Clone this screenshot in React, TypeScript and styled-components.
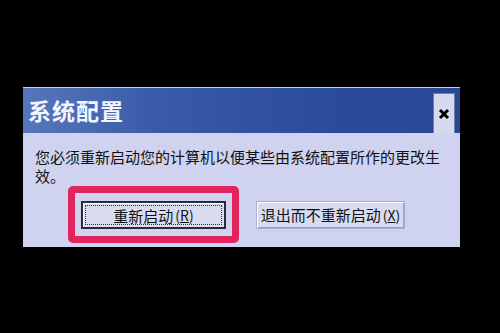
import React, { FunctionComponent } from 'react';
import styled, { createGlobalStyle } from 'styled-components';

const GlobalStyle = createGlobalStyle`
  html, body {
    margin: 0;
    padding: 0;
    background: #000;
  }
  body {
    width: 500px;
    height: 333px;
    overflow: hidden;
    font-family: 'Noto Sans CJK SC', 'Noto Sans', sans-serif;
  }
`;

const App: FunctionComponent = () => (
  <>
    <GlobalStyle />
    <Screen>
      <Dialog>
        <TitleBar>
          <Title>系统配置</Title>
          <CloseButton>
            <svg width="12" height="12" viewBox="0 0 12 12">
              <path d="M2 2 L10 10 M10 2 L2 10" stroke="#000" strokeWidth="3" />
            </svg>
          </CloseButton>
        </TitleBar>
        <Body>
          <Message>您必须重新启动您的计算机以便某些由系统配置所作的更改生效。</Message>
          <ButtonRow>
            <Highlight>
              <DialogButton primary>
                <FocusRing>
                  重新启动<Mnemonic>(<u>R</u>)</Mnemonic>
                </FocusRing>
              </DialogButton>
            </Highlight>
            <DialogButton>
              退出而不重新启动<Mnemonic>(<u>X</u>)</Mnemonic>
            </DialogButton>
          </ButtonRow>
        </Body>
      </Dialog>
    </Screen>
  </>
);

const Screen = styled.div`
  display: flex;
  flex-direction: column;
  align-items: flex-start;
  width: 500px;
  height: 333px;
  padding: 87px 0 0 23px;
  box-sizing: border-box;
  background: #000;
`;

const Dialog = styled.div`
  width: 437px;
  height: 160px;
  display: flex;
  flex-direction: column;
  background: #cfd3ef;
  border-top: 1px solid #c8cde6;
  box-sizing: border-box;
`;

const TitleBar = styled.div`
  height: 45px;
  display: flex;
  align-items: center;
  justify-content: space-between;
  padding: 0 5px 0 5px;
  background: linear-gradient(90deg, #5676bd 0%, #3a5ba8 30%, #2b4b9b 70%, #2a4896 100%);
  box-sizing: border-box;
`;

const Title = styled.span`
  font-size: 23px;
  font-weight: bold;
  color: #f4f6ff;
  letter-spacing: 1px;
  line-height: 1;
`;

const CloseButton = styled.div`
  align-self: flex-end;
  width: 22px;
  height: 40px;
  display: flex;
  align-items: center;
  justify-content: center;
  background: #d7daef;
  border: 1px solid #6f7ca6;
  border-bottom: none;
  box-sizing: border-box;
`;

const Body = styled.div`
  flex: 1;
  display: flex;
  flex-direction: column;
  padding: 14px 12px 4px 12px;
`;

const Message = styled.p`
  margin: 0;
  width: 412px;
  font-size: 15px;
  line-height: 19px;
  color: #111;
`;

const ButtonRow = styled.div`
  display: flex;
  align-items: center;
  gap: 17px;
  margin: 1px 0 0 33px;
`;

const Highlight = styled.div`
  display: flex;
  padding: 8px 6px 7px 6px;
  border: 7px solid #e2245e;
  border-radius: 5px;
`;

const DialogButton = styled.div<{ primary?: boolean }>`
  height: 28px;
  display: flex;
  align-items: center;
  justify-content: center;
  box-sizing: border-box;
  background: #d9dcf1;
  font-size: 15px;
  color: #111;
  white-space: nowrap;
  width: ${(p) => (p.primary ? '145px' : '149px')};
  border: ${(p) => (p.primary ? '2px solid #2a2a3a' : '1px solid #aab0cc')};
  box-shadow: ${(p) =>
    p.primary ? 'inset 1px 1px 0 #fff' : 'inset 1px 1px 0 #fff, inset -1px -1px 0 #9aa0bc'};
  padding: ${(p) => (p.primary ? '2px' : '0 3px')};
`;

const FocusRing = styled.div`
  flex: 1;
  align-self: stretch;
  display: flex;
  align-items: center;
  justify-content: center;
  border: 1px dotted #333;
`;

const Mnemonic = styled.span`
  font-size: 14px;
  margin-left: 2px;
`;

export default App;
